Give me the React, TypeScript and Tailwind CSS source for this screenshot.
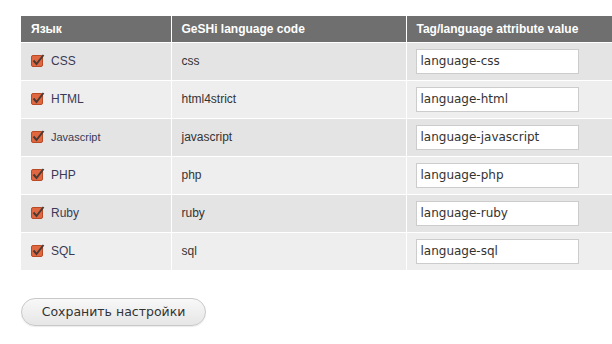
import React from "react";

const rows = [
  { name: "CSS", code: "css", tag: "language-css" },
  { name: "HTML", code: "html4strict", tag: "language-html" },
  { name: "Javascript", code: "javascript", tag: "language-javascript" },
  { name: "PHP", code: "php", tag: "language-php" },
  { name: "Ruby", code: "ruby", tag: "language-ruby" },
  { name: "SQL", code: "sql", tag: "language-sql" },
];

function CheckIcon() {
  return (
    <svg width="14" height="14" viewBox="0 0 14 14" className="shrink-0">
      <rect x="0.5" y="1.5" width="11" height="11" rx="1.5" fill="#e0673f" stroke="#b94a26" />
      <path d="M2.5 6.5 L5.5 10 L12.5 1" fill="none" stroke="#4a3a36" strokeWidth="2" />
    </svg>
  );
}

export default function App() {
  return (
    <div className="w-[612px] h-[344px] bg-white overflow-hidden font-['Liberation_Sans',Arial,sans-serif]">
      <div className="pt-4 pl-[21px]">
        <table className="w-[592px] border-collapse text-[12px] text-[#333]">
          <thead>
            <tr className="bg-[#6f6f6f] text-white font-bold text-left h-[26px]">
              <th className="w-[150px] pl-[10px] border-r border-white">Язык</th>
              <th className="w-[235px] pl-[10px] border-r border-white">GeSHi language code</th>
              <th className="pl-[10px]">Tag/language attribute value</th>
            </tr>
          </thead>
          <tbody>
            {rows.map((r, i) => (
              <tr
                key={r.name}
                className={`h-[38px] border-t border-white ${i % 2 === 0 ? "bg-[#e4e4e4]" : "bg-[#eeeeee]"}`}
              >
                <td className="pl-[10px] border-r border-white">
                  <div className="flex items-center gap-[6px]">
                    <CheckIcon />
                    <span className={r.name === "Javascript" ? "text-[11px] text-[#3a3a55]" : "text-[#3a3a55]"}>{r.name}</span>
                  </div>
                </td>
                <td className="pl-[10px] border-r border-white">{r.code}</td>
                <td className="pl-[9px]">
                  <div className="w-[163px] h-[25px] bg-white border border-[#cccccc] flex items-center pl-[4px] text-[12px] text-[#333] font-['DejaVu_Sans',Verdana,sans-serif]">
                    {r.tag}
                  </div>
                </td>
              </tr>
            ))}
          </tbody>
        </table>
        <button className="mt-[28px] w-[185px] h-[28px] rounded-full border border-[#c8c8c8] bg-gradient-to-b from-[#f8f8f8] to-[#e6e6e6] text-[12.5px] text-[#333] font-['DejaVu_Sans',Verdana,sans-serif] shadow-[0_1px_1px_rgba(0,0,0,0.08)]">
          Сохранить настройки
        </button>
      </div>
    </div>
  );
}
